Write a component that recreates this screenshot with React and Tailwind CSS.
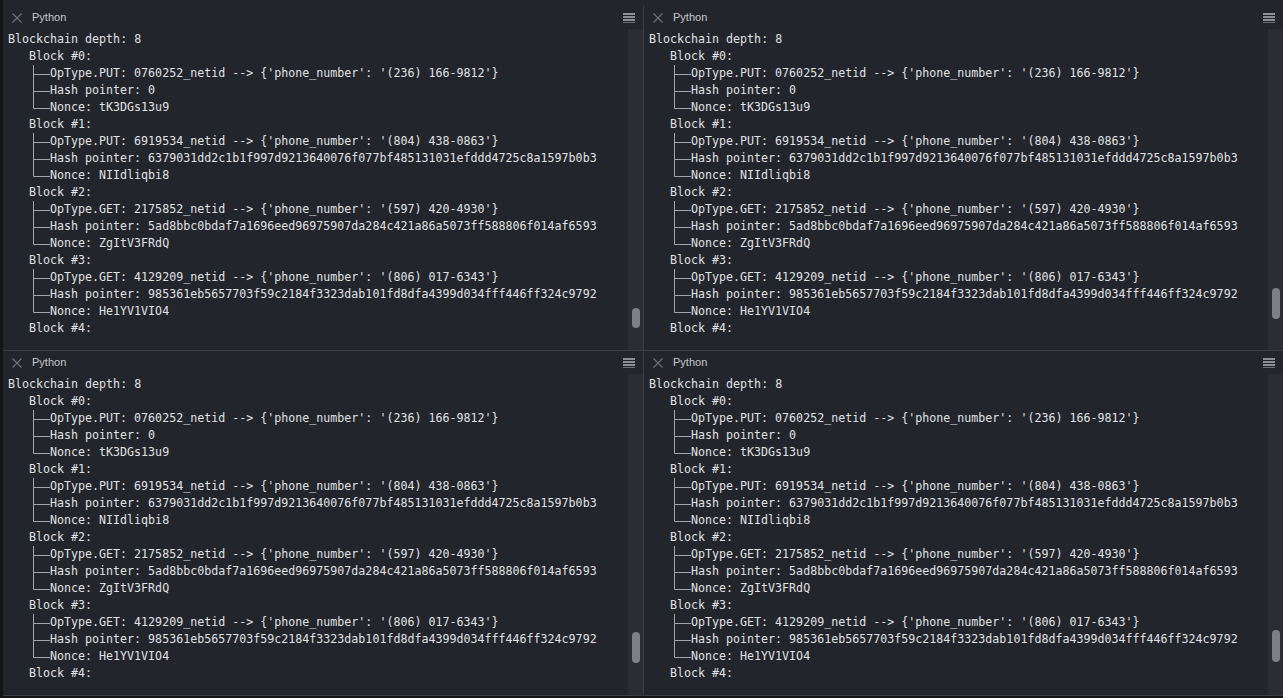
import React from "react";

const blocks = [
  {
    op: "OpType.PUT: 0760252_netid --> {'phone_number': '(236) 166-9812'}",
    hash: "0",
    nonce: "tK3DGs13u9",
  },
  {
    op: "OpType.PUT: 6919534_netid --> {'phone_number': '(804) 438-0863'}",
    hash: "6379031dd2c1b1f997d9213640076f077bf485131031efddd4725c8a1597b0b3",
    nonce: "NIIdliqbi8",
  },
  {
    op: "OpType.GET: 2175852_netid --> {'phone_number': '(597) 420-4930'}",
    hash: "5ad8bbc0bdaf7a1696eed96975907da284c421a86a5073ff588806f014af6593",
    nonce: "ZgItV3FRdQ",
  },
  {
    op: "OpType.GET: 4129209_netid --> {'phone_number': '(806) 017-6343'}",
    hash: "985361eb5657703f59c2184f3323dab101fd8dfa4399d034fff446ff324c9792",
    nonce: "He1YV1VIO4",
  },
];

function Branch({ last }) {
  return (
    <svg width="21" height="17" viewBox="0 0 21 17" className="ml-[21px] shrink-0 block">
      <line x1="4.5" y1="0" x2="4.5" y2={last ? 9.5 : 17} stroke="#a3a5a9" strokeWidth="1" />
      <line x1="4.5" y1="9.5" x2="21" y2="9.5" stroke="#a3a5a9" strokeWidth="1" />
    </svg>
  );
}

function Row({ children, indent }) {
  return (
    <div className={"flex h-[17px] items-center whitespace-pre " + (indent ? "pl-[21px]" : "")}>
      {children}
    </div>
  );
}

function Child({ text, last }) {
  return (
    <div className="flex h-[17px] items-center whitespace-pre">
      <Branch last={last} />
      <span>{text}</span>
    </div>
  );
}

function Hamburger() {
  return (
    <div className="flex flex-col gap-[1px] w-[12px]">
      <div className="h-[2px] bg-[#8d8f93]" />
      <div className="h-[2px] bg-[#8d8f93]" />
      <div className="h-[2px] bg-[#8d8f93]" />
      <div className="h-[1px] bg-[#6d6f73]" />
    </div>
  );
}

function CloseIcon() {
  return (
    <svg width="10" height="10" viewBox="0 0 10 10" className="block">
      <line x1="0.5" y1="0.5" x2="9.5" y2="9.5" stroke="#6f7278" strokeWidth="1.1" />
      <line x1="9.5" y1="0.5" x2="0.5" y2="9.5" stroke="#6f7278" strokeWidth="1.1" />
    </svg>
  );
}

function Panel({ thumbTop, thumbH, right }) {
  return (
    <div
      className={
        "flex flex-col bg-[#22252c] min-w-0 " +
        (right ? "flex-1" : "w-[641px] border-r border-[#3b3e46]")
      }
    >
      <div className="h-[23px] flex items-center pl-[9px] pr-[8px] shrink-0">
        <CloseIcon />
        <span className="ml-[10px] text-[11px] text-[#c6c7c9] font-['Liberation_Sans',Arial,sans-serif]">
          Python
        </span>
        <div className="flex-1" />
        <Hamburger />
      </div>
      <div className="flex flex-1 min-h-0">
        <div className="flex-1 min-w-0 overflow-hidden pl-[5px] pt-[2px] text-[11.65px] leading-[17px] text-[#e0e1e3] font-['DejaVu_Sans_Mono',Menlo,monospace]">
          <Row>Blockchain depth: 8</Row>
          {blocks.map((b, i) => (
            <React.Fragment key={i}>
              <Row indent>{"Block #" + i + ":"}</Row>
              <Child text={b.op} />
              <Child text={"Hash pointer: " + b.hash} />
              <Child text={"Nonce: " + b.nonce} last />
            </React.Fragment>
          ))}
          <Row indent>Block #4:</Row>
        </div>
        <div className="w-[15px] shrink-0 bg-[#2a2d34] flex flex-col items-center">
          <div
            className="w-[8px] rounded-full bg-[#7e8085]"
            style={{ marginTop: thumbTop, height: thumbH }}
          />
        </div>
      </div>
    </div>
  );
}

export default function App() {
  return (
    <div className="w-[1283px] h-[698px] bg-[#141518] pl-[3px] flex flex-col overflow-hidden">
      <div className="h-[6px] bg-[#22252c] shrink-0" />
      <div className="h-[344px] flex shrink-0">
        <Panel thumbTop={279} thumbH={20} />
        <Panel right thumbTop={259} thumbH={31} />
      </div>
      <div className="h-[1px] bg-[#3b3e46] shrink-0" />
      <div className="h-[345px] flex shrink-0 border-b border-[#3b3e46]">
        <Panel thumbTop={258} thumbH={31} />
        <Panel right thumbTop={256} thumbH={32} />
      </div>
    </div>
  );
}
